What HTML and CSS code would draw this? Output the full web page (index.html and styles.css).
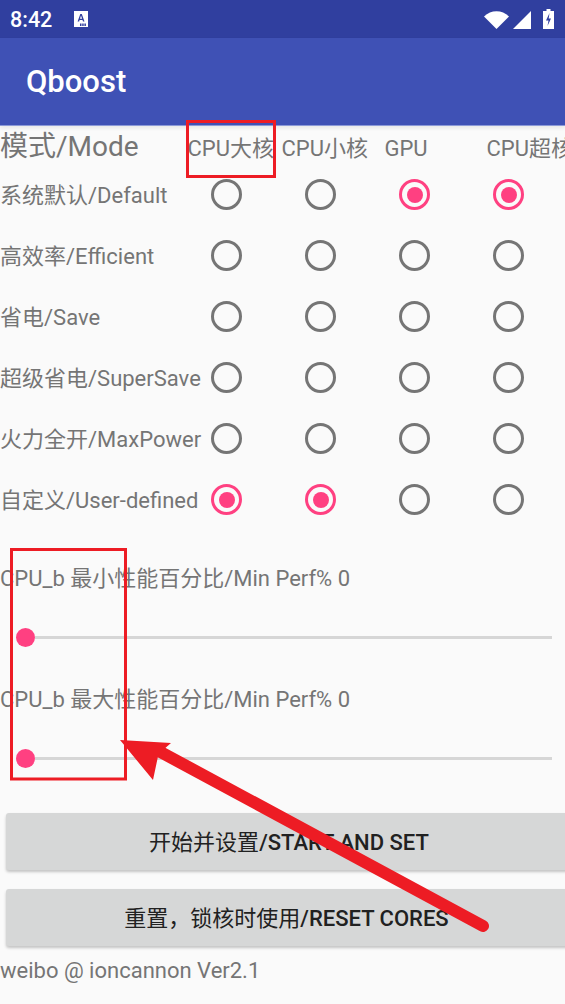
FILE: index.html
```html
<!DOCTYPE html>
<html lang="zh">
<head>
  <meta charset="UTF-8" />
  <meta name="viewport" content="width=device-width, initial-scale=1.0"/>
  <title>Qboost</title>
  <link rel="stylesheet" href="styles.css">
</head>
<body>

  <div class="status-bar">
    <span class="clock">8:42</span>
    <svg class="sim-icon" width="14" height="16" viewBox="0 0 14 16">
      <path fill="#fff" d="M0 0h14v16H0z"/>
      <path fill="#303f9f" d="M3.600 10.500 6.300 3h1.500l2.700 7.500H9l-.5-1.600H5.600l-.5 1.600zM6 7.700h2.100L7 4.600z"/>
      <path fill="#303f9f" d="M6 12.500h1.500V15H6zM8.200 12.500h1.500V15H8.200zM10.400 12.500h1.500V15h-1.500z"/>
    </svg>
    <span class="status-icons">
      <svg width="25" height="18" viewBox="0 0 25 18"><path fill="#fff" d="M0 5.500C3.500 2 8 .3 12.500.3S21.500 2 25 5.500L12.500 18z"/></svg>
      <svg width="18" height="18" viewBox="0 0 18 18"><path fill="#fff" d="M0 18 18 0v18z"/></svg>
      <svg class="battery" width="11" height="20" viewBox="0 0 11 20"><path fill="#fff" d="M3.500 0h4v2H11v18H0V2h3.500z"/><path fill="#303f9f" d="M6.500 4 3 11.500h2.500L4.500 17 8 9.500H5.700z"/></svg>
    </span>
  </div>

  <header class="toolbar">Qboost</header>

  <main>
    <div class="head-row">
      <div class="head-mode">模式/Mode</div>
      <div class="head-col head-big">CPU大核</div>
      <div class="head-col head-small">CPU小核</div>
      <div class="head-col head-gpu">GPU</div>
      <div class="head-col">CPU超核</div>
    </div>

    <div class="mode-row">
      <div class="mode-name">系统默认/Default</div>
      <div class="cell"><span class="radio"></span></div>
      <div class="cell"><span class="radio"></span></div>
      <div class="cell"><span class="radio on"></span></div>
      <div class="cell"><span class="radio on"></span></div>
    </div>
    <div class="mode-row">
      <div class="mode-name">高效率/Efficient</div>
      <div class="cell"><span class="radio"></span></div>
      <div class="cell"><span class="radio"></span></div>
      <div class="cell"><span class="radio"></span></div>
      <div class="cell"><span class="radio"></span></div>
    </div>
    <div class="mode-row">
      <div class="mode-name">省电/Save</div>
      <div class="cell"><span class="radio"></span></div>
      <div class="cell"><span class="radio"></span></div>
      <div class="cell"><span class="radio"></span></div>
      <div class="cell"><span class="radio"></span></div>
    </div>
    <div class="mode-row">
      <div class="mode-name">超级省电/SuperSave</div>
      <div class="cell"><span class="radio"></span></div>
      <div class="cell"><span class="radio"></span></div>
      <div class="cell"><span class="radio"></span></div>
      <div class="cell"><span class="radio"></span></div>
    </div>
    <div class="mode-row">
      <div class="mode-name">火力全开/MaxPower</div>
      <div class="cell"><span class="radio"></span></div>
      <div class="cell"><span class="radio"></span></div>
      <div class="cell"><span class="radio"></span></div>
      <div class="cell"><span class="radio"></span></div>
    </div>
    <div class="mode-row">
      <div class="mode-name">自定义/User-defined</div>
      <div class="cell"><span class="radio on"></span></div>
      <div class="cell"><span class="radio on"></span></div>
      <div class="cell"><span class="radio"></span></div>
      <div class="cell"><span class="radio"></span></div>
    </div>

    <div class="perf">
      <div class="perf-label">CPU_b 最小性能百分比/Min Perf% 0</div>
      <div class="slider"><span class="thumb"></span><span class="track"></span></div>
    </div>
    <div class="perf">
      <div class="perf-label">CPU_b 最大性能百分比/Min Perf% 0</div>
      <div class="slider"><span class="thumb"></span><span class="track"></span></div>
    </div>

    <div class="actions">
      <button type="button"><span class="cn">开始并设置</span>/START AND SET</button>
      <button type="button" class="btn-reset"><span class="cn">重置，锁核时使用</span>/RESET CORES</button>
    </div>

    <div class="credit">weibo @ ioncannon Ver2.1</div>
  </main>

  <!-- red markup drawn over the screenshot -->
  <svg class="markup" width="565" height="1004" viewBox="0 0 565 1004">
    <rect x="187.500" y="121.500" width="87" height="55" fill="none" stroke="#ed1c24" stroke-width="3"/>
    <rect x="11.500" y="549.500" width="114" height="229.500" fill="none" stroke="#ed1c24" stroke-width="3"/>
    <path d="M483 926 155 749" stroke="#ed1c24" stroke-width="12" stroke-linecap="round" fill="none"/>
    <path fill="#ed1c24" d="M120 740 171 743 158.500 754 153 780z"/>
  </svg>

</body>
</html>
```

FILE: styles.css
```css
html,
body {
  margin: 0;
  padding: 0;
  height: 1004px;
  overflow: hidden;
}

body {
  position: relative;
  width: 565px;
  background: #fafafa;
  color: #757575;
  font-family: Roboto, "Noto Sans CJK SC", sans-serif;
  font-size: 22px;
}

.status-bar {
  display: flex;
  align-items: center;
  height: 38px;
  padding: 0 11px 0 10px;
  box-sizing: border-box;
  background: #303f9f;
  color: #fff;
}

.clock {
  font-size: 21.500px;
  font-weight: 500;
  width: 64px;
}

.sim-icon {
  margin-top: -1px;
}

.status-icons {
  display: flex;
  align-items: flex-end;
  gap: 4px;
  margin-left: auto;
  height: 20px;
}

.battery {
  margin-left: 8px;
}

.toolbar {
  display: flex;
  align-items: center;
  height: 87px;
  box-sizing: content-box;
  padding-left: 26px;
  background: #3f51b5;
  color: #fff;
  font-size: 31px;
  font-weight: 500;
  line-height: 91px;
  border-bottom: 1px solid #8c9ad8;
  box-shadow: 0 2px 4px rgba(0, 0, 0, 0.08);
}

main {
  margin-top: -1px;
}

.head-row {
  display: flex;
  align-items: baseline;
  height: 39px;
  box-sizing: border-box;
  padding-top: 2px;
  line-height: 40px;
  white-space: nowrap;
}

.head-mode {
  width: 187.500px;
  flex: none;
  font-size: 28px;
}

.head-col {
  flex: none;
}

.head-big {
  width: 94px;
}

.head-small {
  width: 103px;
}

.head-gpu {
  width: 102px;
}

.mode-row {
  display: grid;
  grid-template-columns: 179.500px repeat(4, 94px);
  align-items: center;
  height: 61px;
  line-height: 30px;
}

.mode-name {
  padding-top: 2px;
  white-space: nowrap;
}

.cell {
  display: flex;
  justify-content: center;
}

.radio {
  display: flex;
  align-items: center;
  justify-content: center;
  width: 31px;
  height: 31px;
  box-sizing: border-box;
  border: 3.500px solid #757575;
  border-radius: 50%;
}

.radio.on {
  border-color: #ff4081;
}

.radio.on::after {
  content: "";
  width: 16px;
  height: 16px;
  border-radius: 50%;
  background: #ff4081;
}

.perf {
  height: 121px;
}

.mode-row + .perf {
  margin-top: 1px;
}

.perf-label {
  height: 30px;
  line-height: 32px;
  padding-top: 32px;
  white-space: nowrap;
}

.slider {
  display: flex;
  align-items: center;
  height: 19px;
  margin-top: 35px;
  padding: 0 13px 0 15.500px;
}

.thumb {
  flex: none;
  width: 19px;
  height: 19px;
  border-radius: 50%;
  background: #ff4081;
}

.track {
  flex: 1;
  height: 3px;
  background: #d6d6d6;
}

.actions {
  display: flex;
  flex-direction: column;
  gap: 19px;
  width: 566px;
  margin: 40px 0 0 6px;
}

button {
  height: 57px;
  border: none;
  border-radius: 3px;
  padding: 0 0 4px;
  background: #d6d7d7;
  color: #212121;
  font-family: inherit;
  font-size: 22px;
  font-weight: 500;
  box-shadow: 0 2px 3px rgba(0, 0, 0, 0.22);
}

.btn-reset {
  padding-right: 5px;
}

.cn {
  font-weight: 400;
}

.credit {
  margin-top: 10px;
  line-height: 30px;
}

.markup {
  position: absolute;
  top: 0;
  left: 0;
}
```
